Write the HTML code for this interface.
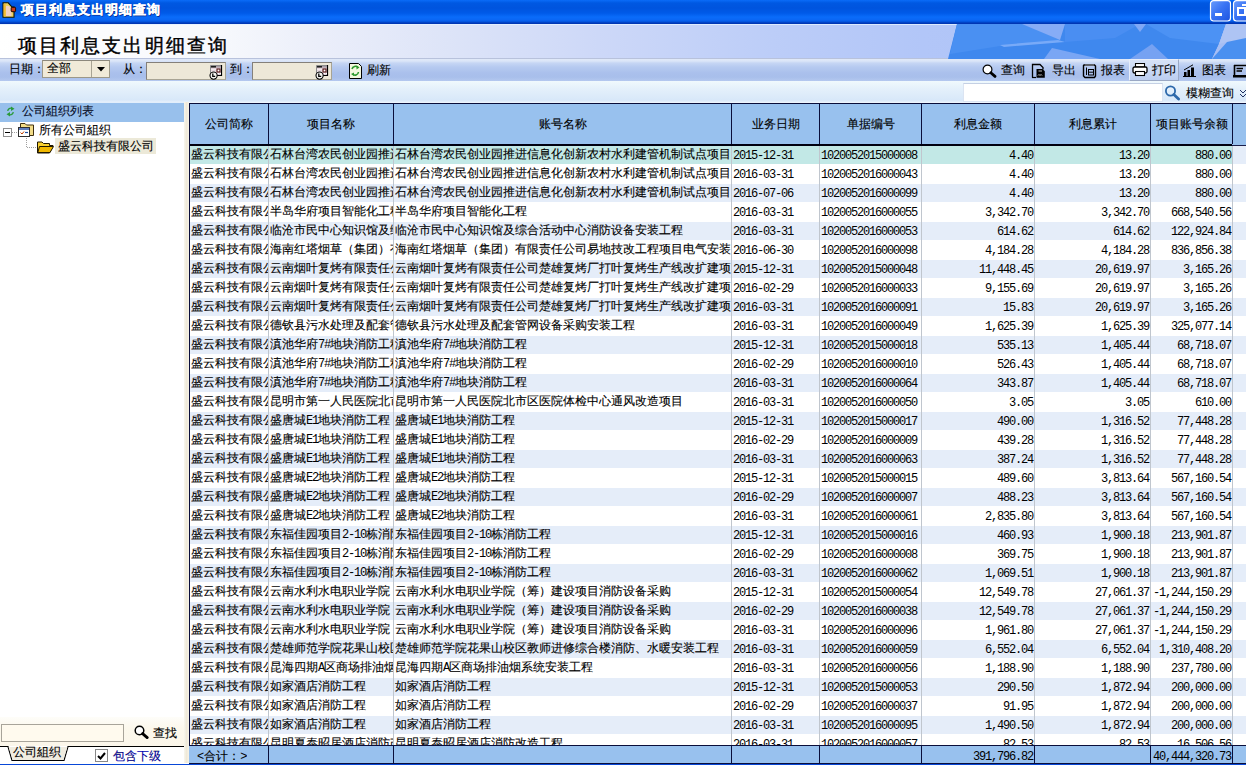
<!DOCTYPE html>
<html><head><meta charset="utf-8">
<style>
*{margin:0;padding:0;box-sizing:border-box}
html,body{width:1246px;height:765px;overflow:hidden;background:#fff;font-family:"Liberation Sans",sans-serif;font-size:12px;color:#000;-webkit-font-smoothing:none}
.c,.tx,.hc,.ft{-webkit-text-stroke:0.12px #000}
.c.n,.ft.n{-webkit-text-stroke:0}
.a{position:static;font-family:"Liberation Mono",monospace;letter-spacing:-1.2px;-webkit-text-stroke:0}
div,span{position:absolute}
#tb{left:0;top:0;width:1246px;height:24px;background:linear-gradient(#0a6cf8 0px,#0058e2 3px,#0054de 8px,#005ae8 13px,#0a6cfa 17px,#0a66f4 20px,#0250d8 22px,#0036b4 23px,#0036b4 24px)}
#tbt{left:21px;top:3px;color:#fff;font-weight:bold;font-size:13px;letter-spacing:1px;line-height:14px;white-space:nowrap;-webkit-text-stroke:0.35px #fff;text-shadow:1px 1px 0 #0a2a8a}
#hd{left:0;top:24px;width:1246px;height:35px;border-top:1px solid rgba(230,242,255,0.8);background:linear-gradient(90deg,#ffffff 0%,#f6f8fc 18%,#eceffa 25%,#dde4f8 36%,#cdd8f8 48%,#bccdf8 62%,#b2c6f8 74%,#acc0f6 100%);border-bottom:1px solid #b8c2dc}
#hdt{left:18px;top:11px;font-size:19px;font-weight:500;-webkit-text-stroke:0.4px #000;letter-spacing:2.1px;line-height:20px;white-space:nowrap}
#tl{left:0;top:59px;width:1246px;height:22px;background:linear-gradient(#e0e9f8 0px,#dbe6f8 2px,#c6d6f4 4px,#b6caf0 8px,#aac0ec 14px,#a8bfeb 18px,#b4c8ef 22px)}
#sb{left:0;top:81px;width:1246px;height:22px;background:linear-gradient(#f0f9fd 0px,#e4f0fb 8px,#d8e8f9 19px,#e6f0fb 21px,#f4f8fd 22px)}
#lp{left:0;top:102px;width:184px;height:661px;background:#fff}
#lph{left:0;top:1px;width:184px;height:19px;background:#98c0ec}
#spl{left:184px;top:102px;width:5px;height:661px;background:linear-gradient(90deg,#f8f6ee,#efe9d8 50%,#f7f3e8)}
#grid{left:189px;top:103px;width:1057px;height:661px;background:#fff;overflow:hidden}
.row{left:0;width:1057px;height:19px;background:#fff;border-top:1px solid #fff}
.row.alt{background:#e5edf9}
.row.sel{background:#e5edf9}
.row.sel .c{background:#c2e8e6;height:18px}
.c{top:0;height:18px;overflow:hidden;white-space:nowrap;line-height:17px;padding-left:1px}
.c.n{font-family:"Liberation Mono",monospace;letter-spacing:-1.2px;padding-left:1px;padding-top:2px}
.c.r{text-align:right;padding-left:0;padding-right:1px}
.vl{top:41px;width:1px;height:610px;background:#c0c6ce}
#hdr{left:0;top:0;width:1057px;height:43px;background:#98c1ee}
.hc{top:1px;height:40px;line-height:40px;text-align:center;white-space:nowrap;overflow:hidden}
.hvl{top:0;width:1px;height:41px;background:#0a0e3a}
#hb{left:0;top:41px;width:1043px;height:2px;background:#000010}
#hb2{left:1043px;top:42px;width:14px;height:1px;background:#1a1e4a}
#gl{left:0;top:0;width:1px;height:660px;background:#0a0e3a}
#gt{left:0;top:0;width:1057px;height:1px;background:#0a0e3a}
#ftr{left:0;top:642px;width:1057px;height:19px;background:#98c1ee;border-top:1px solid #0a0e3a;border-bottom:1px solid #0a0e3a}
.fvl{top:0;width:1px;height:18px;background:#0a0e3a}
.ft{top:0;height:17px;line-height:17px;padding-top:2px;white-space:nowrap;overflow:hidden}
.ft.n{font-family:"Liberation Mono",monospace;letter-spacing:-1.2px;padding-top:3px}
.ft.r{text-align:right;padding-right:1px}
.tx{line-height:13px;white-space:nowrap}
#bot{left:0;top:764px;width:1246px;height:1px;background:#0848d8}
</style></head><body>
<div id="tb">
  <svg style="position:absolute;left:0;top:0" width="18" height="20" viewBox="0 0 18 20">
    <path d="M3 2.8 H8.2 L12 7 H14 V17.3 H3 Z" fill="#e8d060" stroke="#101000" stroke-width="1.1"/>
    <path d="M6 6 H9 L11.5 8.5 V16 H6 Z" fill="#f0d0c0"/>
    <rect x="3.6" y="4" width="2" height="12.5" fill="#f0b830"/>
    <rect x="11.2" y="7.3" width="4.4" height="4.4" rx="0.8" fill="#c83818" stroke="#200800" stroke-width="1"/>
  </svg>
  <div id="tbt">项目利息支出明细查询</div>
  <svg style="position:absolute;left:1209px;top:0" width="37" height="23" viewBox="0 0 37 23">
    <defs><linearGradient id="bg1" x1="0" y1="0" x2="1" y2="1"><stop offset="0" stop-color="#6a9cfc"/><stop offset="0.45" stop-color="#3a74f4"/><stop offset="1" stop-color="#1c54e0"/></linearGradient></defs>
    <rect x="1.5" y="0.6" width="20" height="20.4" rx="3" fill="url(#bg1)" stroke="#fff" stroke-width="1.2"/>
    <rect x="6" y="13" width="7" height="3" fill="#fff"/>
    <rect x="24.5" y="0.6" width="20" height="20.4" rx="3" fill="url(#bg1)" stroke="#fff" stroke-width="1.2"/>
    <rect x="33" y="4" width="6" height="2" fill="#fff"/>
    <rect x="29" y="8" width="7" height="7" fill="none" stroke="#fff" stroke-width="2"/>
  </svg>
</div>
<div id="hd">
  <div id="hdt">项目利息支出明细查询</div>
  <svg style="position:absolute;left:940px;top:-1px" width="306" height="35" viewBox="0 0 306 35">
    <polygon points="17,0 286,0 279,20 272,35 8,35" fill="#3f88ee"/>
    <polygon points="17,0 84,0 120,16 60,22 10,30" fill="#4a90f2"/>
    <polygon points="82,0 125,0 120,16" fill="#86acf6"/>
    <polygon points="60,21 118,16 125,18 64,23" fill="#78aaf8"/>
    <polygon points="112,24 160,35 104,35" fill="#7aa6f4"/>
    <polygon points="125,0 200,0 175,14 125,18" fill="#4a8ef2"/>
    <polygon points="194,0 206,0 200,8" fill="#80a8f6"/>
    <polygon points="190,35 228,35 212,20" fill="#76a2f2"/>
    <polygon points="206,0 286,0 279,20 230,14" fill="#4c92f4"/>
    <polygon points="279,0 306,0 306,14 287,18 272,35 279,20 286,0" fill="#a6bef4"/>
    <polygon points="286,0 306,0 306,14 287,18 279,20" fill="#aec4f4"/>
    <polygon points="287,18 306,14 306,35 272,35" fill="#4a90f0"/>
  </svg>
</div>
<div id="tl"></div>
<div id="sb"></div>
<div class="tx" style="left:9px;top:63px">日期：</div>
<div style="left:42px;top:60px;width:68px;height:18px;background:#f0ead8;border:1px solid #9c9888;border-top-color:#8c887c"></div>
<div class="tx" style="left:47px;top:62px">全部</div>
<div style="left:91px;top:61px;width:1px;height:16px;background:#a8a494"></div>
<svg style="position:absolute;left:97px;top:67px" width="8" height="5"><polygon points="0,0 8,0 4,4.5" fill="#000"/></svg>
<div class="tx" style="left:123px;top:63px">从：</div>
<div style="left:146px;top:62px;width:80px;height:18px;background:#ede8d8;border:1px solid #a8a494;border-top-color:#84807a;border-left-color:#84807a"></div>
<div class="tx" style="left:230px;top:63px">到：</div>
<div style="left:252px;top:62px;width:80px;height:18px;background:#ede8d8;border:1px solid #a8a494;border-top-color:#84807a;border-left-color:#84807a"></div>
<svg style="position:absolute;left:209px;top:64px" width="14" height="16" viewBox="0 0 14 16">
  <rect x="1" y="1" width="11.5" height="10.5" fill="#e6d6de"/>
  <path d="M1.5 11.5 V1.5 H12" stroke="#8c8c8c" stroke-width="1" fill="none"/>
  <path d="M12.5 1 V11.5 H6" stroke="#000" stroke-width="1.2" fill="none"/>
  <rect x="2" y="2" width="5" height="1.6" fill="#1c1c1c"/>
  <rect x="7" y="2" width="5" height="1.6" fill="#a89ca4"/>
  <path d="M2.5 5.5 h1 M4.5 5.5 h1 M6.5 5.5 h1 M2.5 7.5 h1 M4.5 7.5 h1 M6.5 7.5 h1 M9 9.5 h1 M11 9.5 h1" stroke="#fff" stroke-width="1"/>
  <rect x="8" y="5" width="3" height="3" fill="#fff" stroke="#501010" stroke-width="1.1"/>
  <circle cx="4.6" cy="11.6" r="3.6" fill="#f6f6f2" stroke="#000" stroke-width="1.1"/>
  <path d="M3.8 9.6 V12.3 H6.2" stroke="#000" stroke-width="1.3" fill="none"/>
</svg>
<svg style="position:absolute;left:315px;top:64px" width="14" height="16" viewBox="0 0 14 16">
  <rect x="1" y="1" width="11.5" height="10.5" fill="#e6d6de"/>
  <path d="M1.5 11.5 V1.5 H12" stroke="#8c8c8c" stroke-width="1" fill="none"/>
  <path d="M12.5 1 V11.5 H6" stroke="#000" stroke-width="1.2" fill="none"/>
  <rect x="2" y="2" width="5" height="1.6" fill="#1c1c1c"/>
  <rect x="7" y="2" width="5" height="1.6" fill="#a89ca4"/>
  <path d="M2.5 5.5 h1 M4.5 5.5 h1 M6.5 5.5 h1 M2.5 7.5 h1 M4.5 7.5 h1 M6.5 7.5 h1 M9 9.5 h1 M11 9.5 h1" stroke="#fff" stroke-width="1"/>
  <rect x="8" y="5" width="3" height="3" fill="#fff" stroke="#501010" stroke-width="1.1"/>
  <circle cx="4.6" cy="11.6" r="3.6" fill="#f6f6f2" stroke="#000" stroke-width="1.1"/>
  <path d="M3.8 9.6 V12.3 H6.2" stroke="#000" stroke-width="1.3" fill="none"/>
</svg>
<svg style="position:absolute;left:349px;top:63px" width="14" height="16" viewBox="0 0 14 16">
  <path d="M0.5 0.5 H9.5 L12.5 3.5 V15.5 H0.5 Z" fill="#f4f8e0" stroke="#000" stroke-width="1"/>
  <path d="M3 6 A3.5 3.5 0 0 1 9 4.5" fill="none" stroke="#2e9a2e" stroke-width="1.6"/>
  <path d="M9.5 9 A3.5 3.5 0 0 1 3.5 11" fill="none" stroke="#2e9a2e" stroke-width="1.6"/>
  <polygon points="7.5,2.5 10.5,4.5 7.5,6.5" fill="#2e9a2e"/>
  <polygon points="5,9.5 2,11 5,13" fill="#2e9a2e"/>
</svg>
<div class="tx" style="left:367px;top:64px">刷新</div>
<svg style="position:absolute;left:982px;top:64px" width="15" height="14" viewBox="0 0 15 14">
  <circle cx="5.5" cy="5.5" r="4.4" fill="#fff" stroke="#000" stroke-width="1.2"/>
  <line x1="8.8" y1="8.8" x2="13" y2="12.4" stroke="#000" stroke-width="2.8" stroke-linecap="round"/>
</svg>
<div class="tx" style="left:1001px;top:64px">查询</div>
<svg style="position:absolute;left:1031px;top:63px" width="16" height="16" viewBox="0 0 16 16">
  <path d="M1.5 14.5 V1.5 H9 L12 4.5 V6.5" fill="none" stroke="#000" stroke-width="1.3"/>
  <path d="M1 14.5 H5" stroke="#000" stroke-width="1.2"/>
  <path d="M5.5 6 H11.5 L13.8 8.3 V14.8 H5.5 Z" fill="#000"/>
  <rect x="7.5" y="7" width="3.5" height="2" fill="#606060"/>
  <path d="M7 12.5 L8 11.5 L9 12.5 L10 11.5 L11 12.5" stroke="#fff" stroke-width="0.8" fill="none"/>
</svg>
<div class="tx" style="left:1052px;top:64px">导出</div>
<svg style="position:absolute;left:1082px;top:63px" width="15" height="16" viewBox="0 0 15 16">
  <path d="M2 2 H12.5 L13.5 3 V13 L12.5 14.5 H3 L1.5 13 V2.5 Z" fill="none" stroke="#000" stroke-width="1.4"/>
  <path d="M3.5 2 H12" stroke="#fff" stroke-width="0.9" stroke-dasharray="1,1"/>
  <path d="M4.5 4.5 V12" stroke="#000" stroke-width="1"/>
  <rect x="6.5" y="6.5" width="5" height="5.5" fill="none" stroke="#000" stroke-width="1"/>
  <path d="M7 9.2 H11" stroke="#000" stroke-width="1"/>
</svg>
<div class="tx" style="left:1101px;top:64px">报表</div>
<div style="left:1129px;top:59px;width:50px;height:22px;border:1px solid #9aa8c4;border-top-color:#e8eefa;border-left-color:#e8eefa;background:linear-gradient(#d6e2f7,#bccef0)"></div>
<svg style="position:absolute;left:1132px;top:63px" width="16" height="14" viewBox="0 0 16 14">
  <rect x="3.5" y="0.5" width="9" height="3.5" fill="#fff" stroke="#000" stroke-width="1.1"/>
  <rect x="1" y="4" width="14" height="6" rx="1.5" fill="#fff" stroke="#000" stroke-width="1.3"/>
  <rect x="3.5" y="8.5" width="9" height="4" fill="#fff" stroke="#000" stroke-width="1.1"/>
</svg>
<div class="tx" style="left:1152px;top:64px">打印</div>
<svg style="position:absolute;left:1183px;top:64px" width="13" height="13" viewBox="0 0 13 13">
  <path d="M1 6 L10 0.8" stroke="#000" stroke-width="1"/>
  <rect x="1" y="8" width="2.5" height="4.5" fill="#000"/>
  <rect x="4.5" y="6" width="2.5" height="6.5" fill="#000"/>
  <rect x="8" y="3.5" width="3" height="9" fill="#000"/>
  <rect x="0" y="12" width="13" height="1" fill="#000"/>
</svg>
<div class="tx" style="left:1202px;top:64px">图表</div>
<svg style="position:absolute;left:1233px;top:64px" width="13" height="14" viewBox="0 0 13 14">
  <path d="M1.5 1 V12 M1 1.5 H13 M3.5 4.5 H10 M3.5 7 H9" stroke="#000" stroke-width="1.6" fill="none"/>
  <rect x="0" y="11" width="13" height="2.5" fill="#000"/>
</svg>
<div style="left:963px;top:83px;width:200px;height:19px;background:#fff;border:1px solid #dbe4f2;border-top-color:#c4d0e4"></div>
<svg style="position:absolute;left:1164px;top:85px" width="17" height="16" viewBox="0 0 17 16">
  <circle cx="6.5" cy="6" r="4.6" fill="none" stroke="#2c68aa" stroke-width="1.8"/>
  <line x1="9.8" y1="9.4" x2="14.6" y2="14" stroke="#2c68aa" stroke-width="2.8" stroke-linecap="round"/>
</svg>
<div class="tx" style="left:1186px;top:87px">模糊查询</div>
<svg style="position:absolute;left:1239px;top:88px" width="7" height="10" viewBox="0 0 7 10"><path d="M1 2 L4 5 L7 2 M1 6 L4 9 L7 6" stroke="#203060" stroke-width="1" fill="none"/></svg>
<div id="lp">
  <div style="left:0;top:0;width:184px;height:1px;background:#e2eefb"></div><div id="lph"></div>
  <svg style="position:absolute;left:6px;top:4px" width="9" height="11" viewBox="0 0 9 11">
    <path d="M1.8 5 A2.8 2.8 0 0 1 6 2.6" fill="none" stroke="#2a9a3a" stroke-width="1.3"/>
    <polygon points="5,0.5 8.5,2.8 5,5" fill="#2a9a3a"/>
    <path d="M7.2 6 A2.8 2.8 0 0 1 3 8.4" fill="none" stroke="#2a9a3a" stroke-width="1.3"/>
    <polygon points="4,6 0.5,8.2 4,10.5" fill="#2a9a3a"/>
  </svg>
  <div class="tx" style="left:22px;top:3px;color:#0a1030">公司組织列表</div>
  <svg style="position:absolute;left:0;top:18px" width="56" height="34" viewBox="0 0 56 34">
  <rect x="3.5" y="8.5" width="8" height="8" fill="#fff" stroke="#909090" stroke-width="1"/>
  <line x1="5" y1="12.5" x2="10" y2="12.5" stroke="#000" stroke-width="1"/>
  <path d="M12 12.5 H18" stroke="#a0a0a0" stroke-width="1" stroke-dasharray="1,1"/>
  <path d="M26.5 18 V27.5 H37" stroke="#a0a0a0" stroke-width="1" stroke-dasharray="1,1" fill="none"/>
  <path d="M20.5 3.5 H25 L26.5 5 H33.5 V15.5 H20.5 Z" fill="#f2dc88" stroke="#403010" stroke-width="1"/>
  <rect x="18.5" y="7.5" width="11" height="9" fill="#fff" stroke="#303030" stroke-width="1"/>
  <rect x="19" y="8" width="10" height="2" fill="#6080c0"/>
  <path d="M20.5 12.5 L22 14 L24 11.5" stroke="#c04000" stroke-width="1" fill="none"/>
  <path d="M25 12.5 H28" stroke="#2050a0" stroke-width="1.2"/>
  <path d="M37.5 22 H42 L43.5 23.5 H49.5 V25.5 H53 L49.5 33 H37.5 Z" fill="#f8d030" stroke="#201800" stroke-width="1"/>
  <path d="M39.5 26.5 H53.5 L50 32.5 H37.8 Z" fill="#f0b800" stroke="#201800" stroke-width="1"/>
</svg>
  <div class="tx" style="left:39px;top:22px">所有公司組织</div>
  <div style="left:55px;top:36px;width:101px;height:16px;background:#ece9d8"></div>
  <div class="tx" style="left:58px;top:38px">盛云科技有限公司</div>
  <div style="left:0;top:615px;width:184px;height:29px;background:linear-gradient(#fefdf9,#fcf8ec 40%,#fbf6ea)"></div>
  <div style="left:1px;top:622px;width:123px;height:18px;background:#fffaee;border:1px solid #a8a49a"></div>
  <svg style="position:absolute;left:134px;top:623px" width="15" height="14" viewBox="0 0 15 14">
    <circle cx="5.5" cy="5.5" r="4.3" fill="#fff" stroke="#000" stroke-width="1.5"/>
    <line x1="8.6" y1="8.6" x2="13.2" y2="12.6" stroke="#000" stroke-width="2.8" stroke-linecap="round"/>
  </svg>
  <div class="tx" style="left:153px;top:625px">查找</div>
  <div style="left:95px;top:647px;width:13px;height:13px;background:#fff;border:1px solid #888"></div>
  <svg style="position:absolute;left:97px;top:650px" width="9" height="8" viewBox="0 0 9 8"><path d="M1 4 L3.5 6.5 L8 1" stroke="#000" stroke-width="2" fill="none"/></svg>
  <div class="tx" style="left:113px;top:648px;color:#0000b4">包含下级</div>
  <svg style="position:absolute;left:0;top:641px" width="184" height="20" viewBox="0 0 184 20">
    <path d="M0 3.5 H8 L12 17.5 H64 L68 3.5 H184" fill="none" stroke="#000" stroke-width="1.2"/>
    <path d="M8.6 4 L12.6 17 H63.4 L67.4 4 Z" fill="#f0ece0"/>
  </svg>
  <div class="tx" style="left:13px;top:644px">公司組织</div>
</div>
<div id="spl"></div>
<div id="grid">
<div class="row sel" style="top:42px">
<div class="c t" style="left:1px;width:78px">盛云科技有限公司</div>
<div class="c t" style="left:80px;width:124px">石林台湾农民创业园推进信息化创新农村水利建管机制试点项目</div>
<div class="c t" style="left:205px;width:337px">石林台湾农民创业园推进信息化创新农村水利建管机制试点项目</div>
<div class="c n" style="left:543px;width:87px">2015-12-31</div>
<div class="c n" style="left:631px;width:101px">1020052015000008</div>
<div class="c n r" style="left:733px;width:112px">4.40</div>
<div class="c n r" style="left:846px;width:115px">13.20</div>
<div class="c n r" style="left:962px;width:81px">880.00</div>
</div>
<div class="row " style="top:61px">
<div class="c t" style="left:1px;width:78px">盛云科技有限公司</div>
<div class="c t" style="left:80px;width:124px">石林台湾农民创业园推进信息化创新农村水利建管机制试点项目</div>
<div class="c t" style="left:205px;width:337px">石林台湾农民创业园推进信息化创新农村水利建管机制试点项目</div>
<div class="c n" style="left:543px;width:87px">2016-03-31</div>
<div class="c n" style="left:631px;width:101px">1020052016000043</div>
<div class="c n r" style="left:733px;width:112px">4.40</div>
<div class="c n r" style="left:846px;width:115px">13.20</div>
<div class="c n r" style="left:962px;width:81px">880.00</div>
</div>
<div class="row alt" style="top:80px">
<div class="c t" style="left:1px;width:78px">盛云科技有限公司</div>
<div class="c t" style="left:80px;width:124px">石林台湾农民创业园推进信息化创新农村水利建管机制试点项目</div>
<div class="c t" style="left:205px;width:337px">石林台湾农民创业园推进信息化创新农村水利建管机制试点项目</div>
<div class="c n" style="left:543px;width:87px">2016-07-06</div>
<div class="c n" style="left:631px;width:101px">1020052016000099</div>
<div class="c n r" style="left:733px;width:112px">4.40</div>
<div class="c n r" style="left:846px;width:115px">13.20</div>
<div class="c n r" style="left:962px;width:81px">880.00</div>
</div>
<div class="row " style="top:99px">
<div class="c t" style="left:1px;width:78px">盛云科技有限公司</div>
<div class="c t" style="left:80px;width:124px">半岛华府项目智能化工程</div>
<div class="c t" style="left:205px;width:337px">半岛华府项目智能化工程</div>
<div class="c n" style="left:543px;width:87px">2016-03-31</div>
<div class="c n" style="left:631px;width:101px">1020052016000055</div>
<div class="c n r" style="left:733px;width:112px">3,342.70</div>
<div class="c n r" style="left:846px;width:115px">3,342.70</div>
<div class="c n r" style="left:962px;width:81px">668,540.56</div>
</div>
<div class="row alt" style="top:118px">
<div class="c t" style="left:1px;width:78px">盛云科技有限公司</div>
<div class="c t" style="left:80px;width:124px">临沧市民中心知识馆及综合活动中心消防设备安装工程</div>
<div class="c t" style="left:205px;width:337px">临沧市民中心知识馆及综合活动中心消防设备安装工程</div>
<div class="c n" style="left:543px;width:87px">2016-03-31</div>
<div class="c n" style="left:631px;width:101px">1020052016000053</div>
<div class="c n r" style="left:733px;width:112px">614.62</div>
<div class="c n r" style="left:846px;width:115px">614.62</div>
<div class="c n r" style="left:962px;width:81px">122,924.84</div>
</div>
<div class="row " style="top:137px">
<div class="c t" style="left:1px;width:78px">盛云科技有限公司</div>
<div class="c t" style="left:80px;width:124px">海南红塔烟草（集团）有限责任公司易地技改工程项目电气安装</div>
<div class="c t" style="left:205px;width:337px">海南红塔烟草（集团）有限责任公司易地技改工程项目电气安装</div>
<div class="c n" style="left:543px;width:87px">2016-06-30</div>
<div class="c n" style="left:631px;width:101px">1020052016000098</div>
<div class="c n r" style="left:733px;width:112px">4,184.28</div>
<div class="c n r" style="left:846px;width:115px">4,184.28</div>
<div class="c n r" style="left:962px;width:81px">836,856.38</div>
</div>
<div class="row alt" style="top:156px">
<div class="c t" style="left:1px;width:78px">盛云科技有限公司</div>
<div class="c t" style="left:80px;width:124px">云南烟叶复烤有限责任公司楚雄复烤厂打叶复烤生产线改扩建项</div>
<div class="c t" style="left:205px;width:337px">云南烟叶复烤有限责任公司楚雄复烤厂打叶复烤生产线改扩建项</div>
<div class="c n" style="left:543px;width:87px">2015-12-31</div>
<div class="c n" style="left:631px;width:101px">1020052015000048</div>
<div class="c n r" style="left:733px;width:112px">11,448.45</div>
<div class="c n r" style="left:846px;width:115px">20,619.97</div>
<div class="c n r" style="left:962px;width:81px">3,165.26</div>
</div>
<div class="row " style="top:175px">
<div class="c t" style="left:1px;width:78px">盛云科技有限公司</div>
<div class="c t" style="left:80px;width:124px">云南烟叶复烤有限责任公司楚雄复烤厂打叶复烤生产线改扩建项</div>
<div class="c t" style="left:205px;width:337px">云南烟叶复烤有限责任公司楚雄复烤厂打叶复烤生产线改扩建项</div>
<div class="c n" style="left:543px;width:87px">2016-02-29</div>
<div class="c n" style="left:631px;width:101px">1020052016000033</div>
<div class="c n r" style="left:733px;width:112px">9,155.69</div>
<div class="c n r" style="left:846px;width:115px">20,619.97</div>
<div class="c n r" style="left:962px;width:81px">3,165.26</div>
</div>
<div class="row alt" style="top:194px">
<div class="c t" style="left:1px;width:78px">盛云科技有限公司</div>
<div class="c t" style="left:80px;width:124px">云南烟叶复烤有限责任公司楚雄复烤厂打叶复烤生产线改扩建项</div>
<div class="c t" style="left:205px;width:337px">云南烟叶复烤有限责任公司楚雄复烤厂打叶复烤生产线改扩建项</div>
<div class="c n" style="left:543px;width:87px">2016-03-31</div>
<div class="c n" style="left:631px;width:101px">1020052016000091</div>
<div class="c n r" style="left:733px;width:112px">15.83</div>
<div class="c n r" style="left:846px;width:115px">20,619.97</div>
<div class="c n r" style="left:962px;width:81px">3,165.26</div>
</div>
<div class="row " style="top:213px">
<div class="c t" style="left:1px;width:78px">盛云科技有限公司</div>
<div class="c t" style="left:80px;width:124px">德钦县污水处理及配套管网设备采购安装工程</div>
<div class="c t" style="left:205px;width:337px">德钦县污水处理及配套管网设备采购安装工程</div>
<div class="c n" style="left:543px;width:87px">2016-03-31</div>
<div class="c n" style="left:631px;width:101px">1020052016000049</div>
<div class="c n r" style="left:733px;width:112px">1,625.39</div>
<div class="c n r" style="left:846px;width:115px">1,625.39</div>
<div class="c n r" style="left:962px;width:81px">325,077.14</div>
</div>
<div class="row alt" style="top:232px">
<div class="c t" style="left:1px;width:78px">盛云科技有限公司</div>
<div class="c t" style="left:80px;width:124px">滇池华府<span class="a">7#</span>地块消防工程</div>
<div class="c t" style="left:205px;width:337px">滇池华府<span class="a">7#</span>地块消防工程</div>
<div class="c n" style="left:543px;width:87px">2015-12-31</div>
<div class="c n" style="left:631px;width:101px">1020052015000018</div>
<div class="c n r" style="left:733px;width:112px">535.13</div>
<div class="c n r" style="left:846px;width:115px">1,405.44</div>
<div class="c n r" style="left:962px;width:81px">68,718.07</div>
</div>
<div class="row " style="top:251px">
<div class="c t" style="left:1px;width:78px">盛云科技有限公司</div>
<div class="c t" style="left:80px;width:124px">滇池华府<span class="a">7#</span>地块消防工程</div>
<div class="c t" style="left:205px;width:337px">滇池华府<span class="a">7#</span>地块消防工程</div>
<div class="c n" style="left:543px;width:87px">2016-02-29</div>
<div class="c n" style="left:631px;width:101px">1020052016000010</div>
<div class="c n r" style="left:733px;width:112px">526.43</div>
<div class="c n r" style="left:846px;width:115px">1,405.44</div>
<div class="c n r" style="left:962px;width:81px">68,718.07</div>
</div>
<div class="row alt" style="top:270px">
<div class="c t" style="left:1px;width:78px">盛云科技有限公司</div>
<div class="c t" style="left:80px;width:124px">滇池华府<span class="a">7#</span>地块消防工程</div>
<div class="c t" style="left:205px;width:337px">滇池华府<span class="a">7#</span>地块消防工程</div>
<div class="c n" style="left:543px;width:87px">2016-03-31</div>
<div class="c n" style="left:631px;width:101px">1020052016000064</div>
<div class="c n r" style="left:733px;width:112px">343.87</div>
<div class="c n r" style="left:846px;width:115px">1,405.44</div>
<div class="c n r" style="left:962px;width:81px">68,718.07</div>
</div>
<div class="row " style="top:289px">
<div class="c t" style="left:1px;width:78px">盛云科技有限公司</div>
<div class="c t" style="left:80px;width:124px">昆明市第一人民医院北市区医院体检中心通风改造项目</div>
<div class="c t" style="left:205px;width:337px">昆明市第一人民医院北市区医院体检中心通风改造项目</div>
<div class="c n" style="left:543px;width:87px">2016-03-31</div>
<div class="c n" style="left:631px;width:101px">1020052016000050</div>
<div class="c n r" style="left:733px;width:112px">3.05</div>
<div class="c n r" style="left:846px;width:115px">3.05</div>
<div class="c n r" style="left:962px;width:81px">610.00</div>
</div>
<div class="row alt" style="top:308px">
<div class="c t" style="left:1px;width:78px">盛云科技有限公司</div>
<div class="c t" style="left:80px;width:124px">盛唐城<span class="a">E1</span>地块消防工程</div>
<div class="c t" style="left:205px;width:337px">盛唐城<span class="a">E1</span>地块消防工程</div>
<div class="c n" style="left:543px;width:87px">2015-12-31</div>
<div class="c n" style="left:631px;width:101px">1020052015000017</div>
<div class="c n r" style="left:733px;width:112px">490.00</div>
<div class="c n r" style="left:846px;width:115px">1,316.52</div>
<div class="c n r" style="left:962px;width:81px">77,448.28</div>
</div>
<div class="row " style="top:327px">
<div class="c t" style="left:1px;width:78px">盛云科技有限公司</div>
<div class="c t" style="left:80px;width:124px">盛唐城<span class="a">E1</span>地块消防工程</div>
<div class="c t" style="left:205px;width:337px">盛唐城<span class="a">E1</span>地块消防工程</div>
<div class="c n" style="left:543px;width:87px">2016-02-29</div>
<div class="c n" style="left:631px;width:101px">1020052016000009</div>
<div class="c n r" style="left:733px;width:112px">439.28</div>
<div class="c n r" style="left:846px;width:115px">1,316.52</div>
<div class="c n r" style="left:962px;width:81px">77,448.28</div>
</div>
<div class="row alt" style="top:346px">
<div class="c t" style="left:1px;width:78px">盛云科技有限公司</div>
<div class="c t" style="left:80px;width:124px">盛唐城<span class="a">E1</span>地块消防工程</div>
<div class="c t" style="left:205px;width:337px">盛唐城<span class="a">E1</span>地块消防工程</div>
<div class="c n" style="left:543px;width:87px">2016-03-31</div>
<div class="c n" style="left:631px;width:101px">1020052016000063</div>
<div class="c n r" style="left:733px;width:112px">387.24</div>
<div class="c n r" style="left:846px;width:115px">1,316.52</div>
<div class="c n r" style="left:962px;width:81px">77,448.28</div>
</div>
<div class="row " style="top:365px">
<div class="c t" style="left:1px;width:78px">盛云科技有限公司</div>
<div class="c t" style="left:80px;width:124px">盛唐城<span class="a">E2</span>地块消防工程</div>
<div class="c t" style="left:205px;width:337px">盛唐城<span class="a">E2</span>地块消防工程</div>
<div class="c n" style="left:543px;width:87px">2015-12-31</div>
<div class="c n" style="left:631px;width:101px">1020052015000015</div>
<div class="c n r" style="left:733px;width:112px">489.60</div>
<div class="c n r" style="left:846px;width:115px">3,813.64</div>
<div class="c n r" style="left:962px;width:81px">567,160.54</div>
</div>
<div class="row alt" style="top:384px">
<div class="c t" style="left:1px;width:78px">盛云科技有限公司</div>
<div class="c t" style="left:80px;width:124px">盛唐城<span class="a">E2</span>地块消防工程</div>
<div class="c t" style="left:205px;width:337px">盛唐城<span class="a">E2</span>地块消防工程</div>
<div class="c n" style="left:543px;width:87px">2016-02-29</div>
<div class="c n" style="left:631px;width:101px">1020052016000007</div>
<div class="c n r" style="left:733px;width:112px">488.23</div>
<div class="c n r" style="left:846px;width:115px">3,813.64</div>
<div class="c n r" style="left:962px;width:81px">567,160.54</div>
</div>
<div class="row " style="top:403px">
<div class="c t" style="left:1px;width:78px">盛云科技有限公司</div>
<div class="c t" style="left:80px;width:124px">盛唐城<span class="a">E2</span>地块消防工程</div>
<div class="c t" style="left:205px;width:337px">盛唐城<span class="a">E2</span>地块消防工程</div>
<div class="c n" style="left:543px;width:87px">2016-03-31</div>
<div class="c n" style="left:631px;width:101px">1020052016000061</div>
<div class="c n r" style="left:733px;width:112px">2,835.80</div>
<div class="c n r" style="left:846px;width:115px">3,813.64</div>
<div class="c n r" style="left:962px;width:81px">567,160.54</div>
</div>
<div class="row alt" style="top:422px">
<div class="c t" style="left:1px;width:78px">盛云科技有限公司</div>
<div class="c t" style="left:80px;width:124px">东福佳园项目<span class="a">2-10</span>栋消防工程</div>
<div class="c t" style="left:205px;width:337px">东福佳园项目<span class="a">2-10</span>栋消防工程</div>
<div class="c n" style="left:543px;width:87px">2015-12-31</div>
<div class="c n" style="left:631px;width:101px">1020052015000016</div>
<div class="c n r" style="left:733px;width:112px">460.93</div>
<div class="c n r" style="left:846px;width:115px">1,900.18</div>
<div class="c n r" style="left:962px;width:81px">213,901.87</div>
</div>
<div class="row " style="top:441px">
<div class="c t" style="left:1px;width:78px">盛云科技有限公司</div>
<div class="c t" style="left:80px;width:124px">东福佳园项目<span class="a">2-10</span>栋消防工程</div>
<div class="c t" style="left:205px;width:337px">东福佳园项目<span class="a">2-10</span>栋消防工程</div>
<div class="c n" style="left:543px;width:87px">2016-02-29</div>
<div class="c n" style="left:631px;width:101px">1020052016000008</div>
<div class="c n r" style="left:733px;width:112px">369.75</div>
<div class="c n r" style="left:846px;width:115px">1,900.18</div>
<div class="c n r" style="left:962px;width:81px">213,901.87</div>
</div>
<div class="row alt" style="top:460px">
<div class="c t" style="left:1px;width:78px">盛云科技有限公司</div>
<div class="c t" style="left:80px;width:124px">东福佳园项目<span class="a">2-10</span>栋消防工程</div>
<div class="c t" style="left:205px;width:337px">东福佳园项目<span class="a">2-10</span>栋消防工程</div>
<div class="c n" style="left:543px;width:87px">2016-03-31</div>
<div class="c n" style="left:631px;width:101px">1020052016000062</div>
<div class="c n r" style="left:733px;width:112px">1,069.51</div>
<div class="c n r" style="left:846px;width:115px">1,900.18</div>
<div class="c n r" style="left:962px;width:81px">213,901.87</div>
</div>
<div class="row " style="top:479px">
<div class="c t" style="left:1px;width:78px">盛云科技有限公司</div>
<div class="c t" style="left:80px;width:124px">云南水利水电职业学院（筹）建设项目消防设备采购</div>
<div class="c t" style="left:205px;width:337px">云南水利水电职业学院（筹）建设项目消防设备采购</div>
<div class="c n" style="left:543px;width:87px">2015-12-31</div>
<div class="c n" style="left:631px;width:101px">1020052015000054</div>
<div class="c n r" style="left:733px;width:112px">12,549.78</div>
<div class="c n r" style="left:846px;width:115px">27,061.37</div>
<div class="c n r" style="left:962px;width:81px">-1,244,150.29</div>
</div>
<div class="row alt" style="top:498px">
<div class="c t" style="left:1px;width:78px">盛云科技有限公司</div>
<div class="c t" style="left:80px;width:124px">云南水利水电职业学院（筹）建设项目消防设备采购</div>
<div class="c t" style="left:205px;width:337px">云南水利水电职业学院（筹）建设项目消防设备采购</div>
<div class="c n" style="left:543px;width:87px">2016-02-29</div>
<div class="c n" style="left:631px;width:101px">1020052016000038</div>
<div class="c n r" style="left:733px;width:112px">12,549.78</div>
<div class="c n r" style="left:846px;width:115px">27,061.37</div>
<div class="c n r" style="left:962px;width:81px">-1,244,150.29</div>
</div>
<div class="row " style="top:517px">
<div class="c t" style="left:1px;width:78px">盛云科技有限公司</div>
<div class="c t" style="left:80px;width:124px">云南水利水电职业学院（筹）建设项目消防设备采购</div>
<div class="c t" style="left:205px;width:337px">云南水利水电职业学院（筹）建设项目消防设备采购</div>
<div class="c n" style="left:543px;width:87px">2016-03-31</div>
<div class="c n" style="left:631px;width:101px">1020052016000096</div>
<div class="c n r" style="left:733px;width:112px">1,961.80</div>
<div class="c n r" style="left:846px;width:115px">27,061.37</div>
<div class="c n r" style="left:962px;width:81px">-1,244,150.29</div>
</div>
<div class="row alt" style="top:536px">
<div class="c t" style="left:1px;width:78px">盛云科技有限公司</div>
<div class="c t" style="left:80px;width:124px">楚雄师范学院花果山校区教师进修综合楼消防、水暖安装工程</div>
<div class="c t" style="left:205px;width:337px">楚雄师范学院花果山校区教师进修综合楼消防、水暖安装工程</div>
<div class="c n" style="left:543px;width:87px">2016-03-31</div>
<div class="c n" style="left:631px;width:101px">1020052016000059</div>
<div class="c n r" style="left:733px;width:112px">6,552.04</div>
<div class="c n r" style="left:846px;width:115px">6,552.04</div>
<div class="c n r" style="left:962px;width:81px">1,310,408.20</div>
</div>
<div class="row " style="top:555px">
<div class="c t" style="left:1px;width:78px">盛云科技有限公司</div>
<div class="c t" style="left:80px;width:124px">昆海四期<span class="a">A</span>区商场排油烟系统安装工程</div>
<div class="c t" style="left:205px;width:337px">昆海四期<span class="a">A</span>区商场排油烟系统安装工程</div>
<div class="c n" style="left:543px;width:87px">2016-03-31</div>
<div class="c n" style="left:631px;width:101px">1020052016000056</div>
<div class="c n r" style="left:733px;width:112px">1,188.90</div>
<div class="c n r" style="left:846px;width:115px">1,188.90</div>
<div class="c n r" style="left:962px;width:81px">237,780.00</div>
</div>
<div class="row alt" style="top:574px">
<div class="c t" style="left:1px;width:78px">盛云科技有限公司</div>
<div class="c t" style="left:80px;width:124px">如家酒店消防工程</div>
<div class="c t" style="left:205px;width:337px">如家酒店消防工程</div>
<div class="c n" style="left:543px;width:87px">2015-12-31</div>
<div class="c n" style="left:631px;width:101px">1020052015000053</div>
<div class="c n r" style="left:733px;width:112px">290.50</div>
<div class="c n r" style="left:846px;width:115px">1,872.94</div>
<div class="c n r" style="left:962px;width:81px">200,000.00</div>
</div>
<div class="row " style="top:593px">
<div class="c t" style="left:1px;width:78px">盛云科技有限公司</div>
<div class="c t" style="left:80px;width:124px">如家酒店消防工程</div>
<div class="c t" style="left:205px;width:337px">如家酒店消防工程</div>
<div class="c n" style="left:543px;width:87px">2016-02-29</div>
<div class="c n" style="left:631px;width:101px">1020052016000037</div>
<div class="c n r" style="left:733px;width:112px">91.95</div>
<div class="c n r" style="left:846px;width:115px">1,872.94</div>
<div class="c n r" style="left:962px;width:81px">200,000.00</div>
</div>
<div class="row alt" style="top:612px">
<div class="c t" style="left:1px;width:78px">盛云科技有限公司</div>
<div class="c t" style="left:80px;width:124px">如家酒店消防工程</div>
<div class="c t" style="left:205px;width:337px">如家酒店消防工程</div>
<div class="c n" style="left:543px;width:87px">2016-03-31</div>
<div class="c n" style="left:631px;width:101px">1020052016000095</div>
<div class="c n r" style="left:733px;width:112px">1,490.50</div>
<div class="c n r" style="left:846px;width:115px">1,872.94</div>
<div class="c n r" style="left:962px;width:81px">200,000.00</div>
</div>
<div class="row " style="top:631px">
<div class="c t" style="left:1px;width:78px">盛云科技有限公司</div>
<div class="c t" style="left:80px;width:124px">昆明夏泰昭居酒店消防改造工程</div>
<div class="c t" style="left:205px;width:337px">昆明夏泰昭居酒店消防改造工程</div>
<div class="c n" style="left:543px;width:87px">2016-03-31</div>
<div class="c n" style="left:631px;width:101px">1020052016000057</div>
<div class="c n r" style="left:733px;width:112px">82.53</div>
<div class="c n r" style="left:846px;width:115px">82.53</div>
<div class="c n r" style="left:962px;width:81px">16,506.56</div>
</div>
<div class="vl" style="left:79px"></div>
<div class="vl" style="left:204px"></div>
<div class="vl" style="left:542px"></div>
<div class="vl" style="left:630px"></div>
<div class="vl" style="left:732px"></div>
<div class="vl" style="left:845px"></div>
<div class="vl" style="left:961px"></div>
<div class="vl" style="left:1043px"></div>
<div id="hdr">
<div class="hc" style="left:1px;width:78px">公司简称</div>
<div class="hc" style="left:80px;width:124px">项目名称</div>
<div class="hc" style="left:205px;width:337px">账号名称</div>
<div class="hc" style="left:543px;width:87px">业务日期</div>
<div class="hc" style="left:631px;width:101px">单据编号</div>
<div class="hc" style="left:733px;width:112px">利息金额</div>
<div class="hc" style="left:846px;width:115px">利息累计</div>
<div class="hc" style="left:962px;width:81px">项目账号余额</div>
<div class="hvl" style="left:79px"></div>
<div class="hvl" style="left:204px"></div>
<div class="hvl" style="left:542px"></div>
<div class="hvl" style="left:630px"></div>
<div class="hvl" style="left:732px"></div>
<div class="hvl" style="left:845px"></div>
<div class="hvl" style="left:961px"></div>
<div class="hvl" style="left:1043px"></div>
</div>
<div id="hb"></div><div id="hb2"></div>
<div id="gt"></div><div id="gl"></div>
<div id="ftr">
<div class="fvl" style="left:79px"></div>
<div class="fvl" style="left:204px"></div>
<div class="fvl" style="left:542px"></div>
<div class="fvl" style="left:630px"></div>
<div class="fvl" style="left:732px"></div>
<div class="fvl" style="left:845px"></div>
<div class="fvl" style="left:961px"></div>
<div class="fvl" style="left:1043px"></div>
<div class="ft" style="left:8px"><span class="a" style="letter-spacing:0">&lt;</span>合计：<span class="a" style="letter-spacing:0">&gt;</span></div>
<div class="ft n r" style="left:733px;width:112px">391,796.82</div>
<div class="ft n r" style="left:962px;width:81px">40,444,320.73</div>
</div>
</div>
<div id="bot"></div>
<script>
(function(){try{
var s=document.createElement('span');
s.style.cssText='position:absolute;left:-3000px;top:0;font-size:12px;white-space:nowrap;font-family:"Liberation Sans",sans-serif;letter-spacing:0;font-weight:normal';
s.textContent='\u76db\u4e91\u79d1\u6280\u6709\u9650\u516c\u53f8\u9879\u76ee';
document.body.appendChild(s);
var w=s.getBoundingClientRect().width/10;
if(w>0&&Math.abs(w-12)>0.3){
var d=12-w;var st=document.createElement('style');
st.textContent='.c.t,.tx,.hc,.ft{letter-spacing:'+d.toFixed(2)+'px}';
document.head.appendChild(st);
s.style.fontSize='13px';s.style.fontWeight='bold';
var w13=s.getBoundingClientRect().width/10;
document.getElementById('tbt').style.letterSpacing=(14-w13).toFixed(2)+'px';
s.style.fontSize='19px';
var w18=s.getBoundingClientRect().width/10;
document.getElementById('hdt').style.letterSpacing=(21.1-w18).toFixed(2)+'px';
}
s.parentNode.removeChild(s);
}catch(e){}})();
</script>
</body></html>
